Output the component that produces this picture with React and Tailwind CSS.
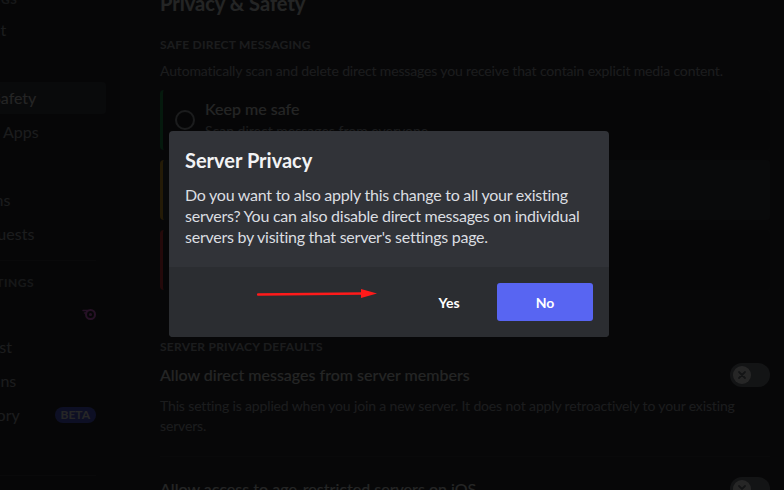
export default function App() {
  const userItems = ['My Account', 'Profiles', 'Privacy & Safety', 'Authorized Apps', 'Devices', 'Connections', 'Friend Requests'];
  const billingItems = ['Nitro', 'Server Boost', 'Subscriptions', 'Gift Inventory', 'Billing'];

  return (
    <div className="relative w-[784px] h-[490px] overflow-hidden flex bg-[#313338] font-['Lato',sans-serif]">
      {/* sidebar */}
      <aside className="w-[120px] h-full shrink-0 bg-[#2b2d31] overflow-hidden">
        <div className="w-[194px] ml-[-88px] mt-[-14px] flex flex-col">
          <div className="px-[10px] py-[6px] text-[12px] leading-[16px] font-bold uppercase tracking-[0.04em] text-[#949ba4]">
            User Settings
          </div>
          {userItems.map((item) => (
            <div
              key={item}
              className={
                item === 'Privacy & Safety'
                  ? 'h-[32px] mb-[2px] px-[10px] flex items-center rounded-[4px] bg-[#404249] text-[16px] text-[#f2f3f5] whitespace-nowrap'
                  : 'h-[32px] mb-[2px] px-[10px] flex items-center rounded-[4px] text-[16px] text-[#b5bac1] whitespace-nowrap'
              }
            >
              {item}
            </div>
          ))}
          <div className="mx-[10px] my-[8px] h-px bg-[#3f4147]" />
          <div className="px-[10px] py-[6px] text-[12px] leading-[16px] font-bold uppercase tracking-[0.04em] text-[#949ba4]">
            Billing Settings
          </div>
          {billingItems.map((item) => (
            <div
              key={item}
              className="h-[32px] mb-[2px] px-[10px] flex items-center justify-between rounded-[4px] text-[16px] text-[#b5bac1] whitespace-nowrap"
            >
              <span>{item}</span>
              {item === 'Nitro' && (
                <svg width="14" height="14" viewBox="0 0 14 14" className="mt-[2px]">
                  <circle cx="8.5" cy="7.5" r="4.5" fill="none" stroke="#ff73fa" strokeWidth="2" />
                  <circle cx="8.5" cy="7.5" r="1.5" fill="#ff73fa" />
                  <path d="M1 3.5h5M2.5 6h2" stroke="#ff73fa" strokeWidth="1.4" strokeLinecap="round" />
                </svg>
              )}
              {item === 'Gift Inventory' && (
                <span className="h-[16px] px-[6px] rounded-full bg-[#5865f2] text-white text-[12px] leading-[16px] font-bold">
                  BETA
                </span>
              )}
            </div>
          ))}
          <div className="mx-[10px] my-[8px] h-px bg-[#3f4147]" />
        </div>
      </aside>

      {/* content */}
      <main className="flex-1 h-full pl-[40px] overflow-hidden">
        <div className="w-[610px] mt-[-9px] flex flex-col">
          <h1 className="text-[20px] leading-[24px] font-bold text-[#f2f3f5] mb-[22px]">Privacy &amp; Safety</h1>
          <div className="text-[12px] leading-[16px] font-bold uppercase tracking-[0.02em] text-[#b5bac1] mb-[8px]">
            Safe Direct Messaging
          </div>
          <p className="text-[14px] leading-[20px] tracking-[-0.15px] text-[#b5bac1]">
            Automatically scan and delete direct messages you receive that contain explicit media content.
          </p>

          <div className="mt-[9px] flex flex-col gap-[10px]">
            <RadioCard
              border="border-[#23a55a]"
              bg="bg-[#2b2d31]"
              title="Keep me safe"
              sub="Scan direct messages from everyone."
            />
            <RadioCard
              border="border-[#f0b232]"
              bg="bg-[#404249]"
              title="My friends are nice"
              sub="Scan direct messages from everyone unless they are a friend."
              selected
            />
            <RadioCard
              border="border-[#f23f43]"
              bg="bg-[#2b2d31]"
              title="Do not scan"
              sub="Direct messages will not be scanned for explicit content."
            />
          </div>

          <div className="mt-[49px] text-[12px] leading-[16px] font-bold uppercase tracking-[0.02em] text-[#b5bac1]">
            Server Privacy Defaults
          </div>
          <div className="mt-[8px] h-[24px] flex items-center justify-between">
            <span className="text-[16px] leading-[20px] font-medium text-[#f2f3f5]">Allow direct messages from server members</span>
            <Toggle />
          </div>
          <p className="mt-[9px] text-[14px] leading-[20px] tracking-[-0.15px] text-[#b5bac1]">
            This setting is applied when you join a new server. It does not apply retroactively to your existing servers.
          </p>
          <div className="my-[20px] h-px bg-[#3f4147]" />
          <div className="h-[24px] flex items-center justify-between">
            <span className="text-[16px] leading-[20px] font-medium text-[#f2f3f5]">Allow access to age-restricted servers on iOS</span>
            <Toggle />
          </div>
        </div>
      </main>

      {/* backdrop */}
      <div className="absolute inset-0 bg-black/85" />

      {/* modal */}
      <div className="absolute left-[169px] top-[131px] w-[440px] rounded-[4px] overflow-hidden bg-[#313338]">
        <div className="px-[16px] pt-[17px] pb-[20px]">
          <h2 className="text-[20px] leading-[24px] font-bold text-[#f2f3f5]">Server Privacy</h2>
          <p className="mt-[12px] text-[16px] leading-[21px] tracking-[-0.25px] text-[#dbdee1]">
            Do you want to also apply this change to all your existing servers? You can also disable direct messages on individual servers by visiting that server's settings page.
          </p>
        </div>
        <div className="relative h-[70px] p-[16px] flex justify-end bg-[#2b2d31]">
          <svg className="absolute left-[88px] top-[20px]" width="122" height="14" viewBox="0 0 122 14">
            <line x1="1" y1="7.5" x2="106" y2="6.5" stroke="#ff1a1a" strokeWidth="2.5" strokeLinecap="round" />
            <polygon points="104,2 120,6.5 104,11" fill="#ff1a1a" />
          </svg>
          <button className="w-[96px] h-[38px] rounded-[3px] text-[14px] font-bold text-white">Yes</button>
          <button className="w-[96px] h-[38px] rounded-[3px] bg-[#5865f2] text-[14px] font-bold text-white">No</button>
        </div>
      </div>
    </div>
  );
}

function RadioCard({ border, bg, title, sub, selected }) {
  return (
    <div className={`h-[60px] rounded-[4px] border-l-[3px] ${border} ${bg} px-[12px] flex items-center gap-[10px]`}>
      <span className="w-[20px] h-[20px] rounded-full border-2 border-[#b5bac1] shrink-0 flex items-center justify-center">
        {selected && <span className="w-[10px] h-[10px] rounded-full bg-white" />}
      </span>
      <div className="flex flex-col">
        <span className="text-[16px] leading-[20px] font-medium text-[#f2f3f5]">{title}</span>
        <span className="mt-[2px] text-[14px] leading-[20px] text-[#b5bac1]">{sub}</span>
      </div>
    </div>
  );
}

function Toggle() {
  return (
    <span className="w-[40px] h-[24px] rounded-full bg-[#80848e] p-[3px] flex items-center shrink-0">
      <span className="w-[18px] h-[18px] rounded-full bg-white flex items-center justify-center">
        <svg width="10" height="10" viewBox="0 0 10 10">
          <path d="M2 2l6 6M8 2l-6 6" stroke="#80848e" strokeWidth="1.8" strokeLinecap="round" />
        </svg>
      </span>
    </span>
  );
}
